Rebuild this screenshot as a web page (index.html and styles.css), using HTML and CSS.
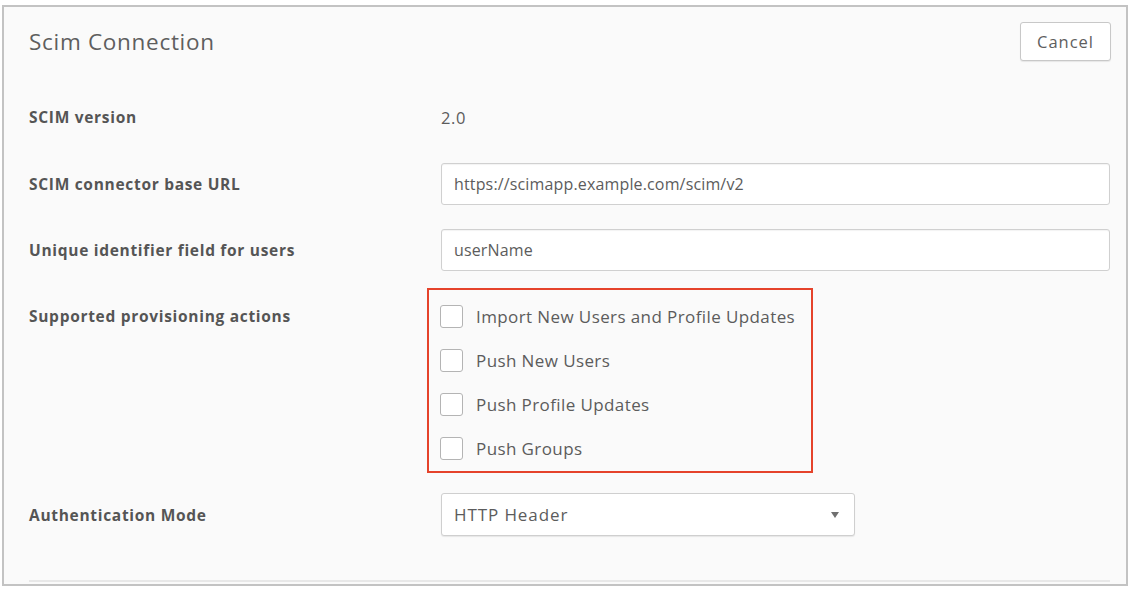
FILE: index.html
```html
<!DOCTYPE html>
<html lang="en">
<head>
    <meta charset="UTF-8">
    <meta name="viewport" content="width=device-width, initial-scale=1.0">
    <title>Scim Connection</title>
    <link rel="stylesheet" href="styles.css">
</head>
<body>

<div class="panel">
    <div class="panel-header">
        <h2>Scim Connection</h2>
        <button class="btn" type="button">Cancel</button>
    </div>

    <div class="form">
        <div class="field field-version">
            <label>SCIM version</label>
            <span class="value">2.0</span>
        </div>

        <div class="field field-url">
            <label for="baseUrl">SCIM connector base URL</label>
            <input id="baseUrl" type="text" value="https://scimapp.example.com/scim/v2">
        </div>

        <div class="field field-uid">
            <label for="uid">Unique identifier field for users</label>
            <input id="uid" type="text" value="userName">
        </div>

        <div class="field field-actions">
            <label>Supported provisioning actions</label>
            <div class="actions">
                <label class="check"><span class="box"></span>Import New Users and Profile Updates</label>
                <label class="check"><span class="box"></span>Push New Users</label>
                <label class="check"><span class="box"></span>Push Profile Updates</label>
                <label class="check"><span class="box"></span>Push Groups</label>
            </div>
        </div>

        <div class="field field-auth">
            <label for="auth">Authentication Mode</label>
            <div class="select" id="auth">
                <span>HTTP Header</span>
                <span class="arrow"></span>
            </div>
        </div>

        <div class="divider"></div>
    </div>
</div>

</body>
</html>
```

FILE: styles.css
```css
body {
    margin: 0;
    font-family: "Open Sans", sans-serif;
    background-color: #fff;
    color: #5c5c5c;
}
.panel {
    margin: 5px 4px 0 2px;
    height: 581px;
    box-sizing: border-box;
    background-color: #fafafa;
    border: 2px solid #c3c3c3;
}
.panel-header {
    display: flex;
    justify-content: space-between;
    align-items: center;
    padding: 15px 15px 0 25px;
}
.panel-header h2 {
    margin: 0;
    font-size: 22.5px;
    font-weight: normal;
    letter-spacing: 0.7px;
    color: #5e5e5e;
}
.btn {
    width: 91px;
    height: 39px;
    padding: 0;
    font-family: inherit;
    font-size: 16.5px;
    letter-spacing: 1px;
    color: #5e5e5e;
    background-color: #fff;
    border: 1px solid #c8c8c8;
    border-radius: 3px;
    box-shadow: 0 1px 1px rgba(0, 0, 0, 0.08);
}
.form {
    padding: 0 16px 0 25px;
}
.field {
    display: flex;
    align-items: center;
}
.field > label {
    width: 412px;
    flex-shrink: 0;
    font-size: 15.5px;
    font-weight: bold;
    letter-spacing: 0.7px;
    color: #555;
}
.field-version {
    height: 42px;
    margin-top: 35px;
}
.value {
    font-size: 16.5px;
    letter-spacing: 0.6px;
}
.field-url {
    margin-top: 25px;
}
.field-uid {
    margin-top: 24px;
}
input {
    flex: 1;
    height: 42px;
    box-sizing: border-box;
    padding: 0 12px;
    font-family: inherit;
    font-size: 16px;
    letter-spacing: 0.15px;
    color: #5c5c5c;
    background-color: #fff;
    border: 1px solid #d0d0d0;
    border-radius: 3px;
    box-shadow: inset 0 1px 1px rgba(0, 0, 0, 0.05);
}
.field-actions {
    align-items: flex-start;
    margin-top: 17px;
}
.field-actions > label {
    margin-top: 6px;
    line-height: 44px;
}
.actions {
    width: 386px;
    box-sizing: border-box;
    margin-left: -14px;
    padding: 4px 0 1px 11px;
    border: 2px solid #e5432b;
}
.check {
    display: flex;
    align-items: center;
    height: 44px;
    font-size: 17px;
    letter-spacing: 0.4px;
}
.box {
    width: 21px;
    height: 21px;
    margin-right: 13px;
    background-color: #fff;
    border: 1px solid #b4b4b4;
    border-radius: 3px;
}
.field-auth {
    margin-top: 20px;
}
.select {
    width: 414px;
    height: 43px;
    box-sizing: border-box;
    display: flex;
    justify-content: space-between;
    align-items: center;
    padding: 0 15px 0 12px;
    font-size: 17px;
    letter-spacing: 0.9px;
    background-color: #fff;
    border: 1px solid #cfcfcf;
    border-radius: 3px;
    box-shadow: 0 1px 1px rgba(0, 0, 0, 0.08);
}
.arrow {
    width: 0;
    height: 0;
    border-left: 4px solid transparent;
    border-right: 4px solid transparent;
    border-top: 6px solid #707070;
}
.divider {
    margin-top: 44px;
    height: 2px;
    background-color: #e8e8e8;
}
```
